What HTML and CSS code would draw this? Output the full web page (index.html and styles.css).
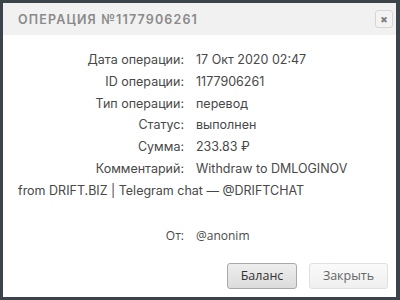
FILE: index.html
```html
<!DOCTYPE html>
<html>
<head>
<meta charset="utf-8">
<link rel="stylesheet" href="styles.css">
</head>
<body>
<div class="dialog">
  <div class="header">
    <div class="title">ОПЕРАЦИЯ №1177906261</div>
    <div class="close">&#x2716;</div>
  </div>
  <div class="body">
    <div class="row"><span class="label">Дата операции:</span>17 Окт 2020 02:47</div>
    <div class="row"><span class="label">ID операции:</span>1177906261</div>
    <div class="row"><span class="label">Тип операции:</span>перевод</div>
    <div class="row"><span class="label">Статус:</span>выполнен</div>
    <div class="row"><span class="label">Сумма:</span>233.83 ₽</div>
    <div class="row"><span class="label">Комментарий:</span>Withdraw to DMLOGINOV from DRIFT.BIZ | Telegram chat — @DRIFTCHAT</div>
    <div class="row from"><span class="label">От:</span>@anonim</div>
    <div class="buttons">
      <div class="btn primary">Баланс</div>
      <div class="btn">Закрыть</div>
    </div>
  </div>
</div>
</body>
</html>
```
FILE: styles.css
```css
html, body { margin: 0; padding: 0; }
body {
  width: 400px; height: 300px;
  background: #3b434b;
  padding: 3px 4px 3px 3px;
  box-sizing: border-box;
  font-family: Inter, "DejaVu Sans", sans-serif;
}
.dialog {
  background: #fff;
  height: 294px;
  display: flex;
  flex-direction: column;
}
.header {
  background: #f1f1f1;
  height: 32px;
  display: flex;
  align-items: center;
  justify-content: space-between;
  padding: 0 3px 0 15px;
}
.title {
  color: #8a8a8a;
  font-size: 12.5px;
  font-weight: 600;
  letter-spacing: 1.15px;
}
.close {
  width: 16px; height: 16px;
  border: 1px solid #d6d6d6;
  border-radius: 3px;
  background: #f3f3f3;
  color: #808080;
  font-size: 9px;
  display: flex; align-items: center; justify-content: center;
}
.body {
  padding: 14px 21px 0 15px;
  color: #484848;
  font-size: 12.5px;
  line-height: 21.8px;
}
.label {
  display: inline-block;
  width: 166px;
  text-align: right;
  margin-right: 12px;
}
.from {
  margin-top: 23px;
  font-family: "Open Sans", sans-serif;
  font-size: 12px;
}
.buttons {
  display: flex;
  justify-content: flex-end;
  gap: 12px;
  margin-top: 17px;
  margin-right: -13px;
}
.btn {
  font-family: "Open Sans", sans-serif;
  font-size: 12.5px;
  height: 24px;
  line-height: 24px;
  border: 1px solid #e0e0e0;
  border-radius: 3px;
  background: linear-gradient(#fafafa, #efefef);
  color: #666;
  width: 77px;
  text-align: center;
}
.btn.primary {
  width: 68px;
  border-color: #a9a9a9;
  background: linear-gradient(#eeeeee, #dcdcdc);
  color: #333;
}
```
